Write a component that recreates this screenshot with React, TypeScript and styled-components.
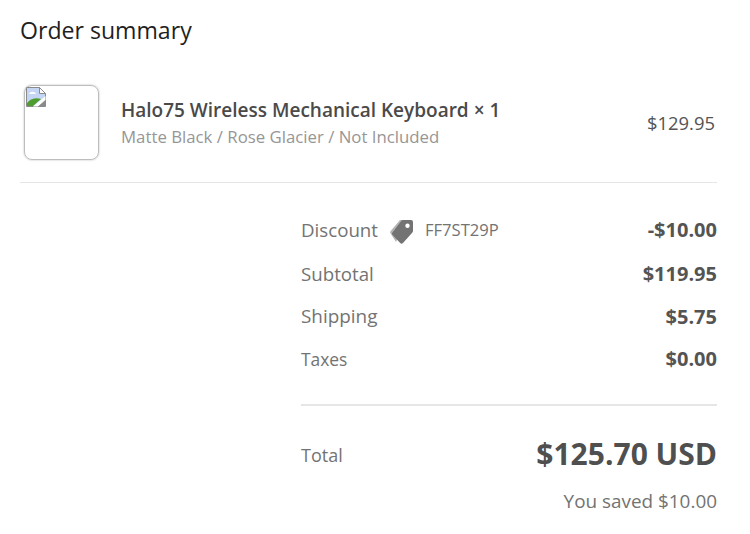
import React from 'react';
import styled, { createGlobalStyle } from 'styled-components';

const GlobalStyle = createGlobalStyle`
  html, body {
    margin: 0;
    padding: 0;
    background: #fff;
    font-family: "Open Sans", "Liberation Sans", sans-serif;
  }
`;

const Page = styled.div`
  width: 750px;
  height: 534px;
  box-sizing: border-box;
  padding: 15px 33px 0 20px;
  overflow: hidden;
`;

const Title = styled.h2`
  margin: 0;
  font-size: 23.1px;
  line-height: 30px;
  font-weight: 400;
  color: #1f1f1f;
`;

const ProductRow = styled.div`
  display: flex;
  align-items: center;
  margin-top: 40px;
  padding: 0 2px 22px 4px;
  border-bottom: 1px solid #e6e6e6;
`;

const Thumb = styled.div`
  width: 75px;
  height: 75px;
  box-sizing: border-box;
  flex: none;
  padding: 1px;
  border: 1px solid #bdbdbd;
  border-radius: 8px;
  box-shadow: 0 0 2px rgba(0, 0, 0, 0.3);
`;

const ProductInfo = styled.div`
  flex: 1;
  margin-left: 22px;
  padding-top: 2px;
`;

const ProductName = styled.div`
  font-size: 19px;
  line-height: 26px;
  font-weight: 600;
  color: #4a4a4a;
`;

const ProductVariant = styled.div`
  font-size: 16.8px;
  line-height: 28px;
  color: #969696;
`;

const ProductPrice = styled.div`
  font-size: 18.4px;
  font-weight: 500;
  color: #545454;
`;

const Summary = styled.div`
  margin: 25px 0 0 281px;
`;

const Line = styled.div`
  display: flex;
  align-items: center;
  justify-content: space-between;
  height: 42.5px;

  &:first-child {
    padding-bottom: 2px;
  }
`;

const Label = styled.div<{ $size?: number }>`
  display: flex;
  align-items: center;
  font-size: ${(props) => props.$size ?? 18.7}px;
  color: #737373;
`;

const TotalLabel = styled(Label)`
  margin-top: 2px;
`;

const Code = styled.span`
  margin-left: 12px;
  font-size: 16.6px;
  color: #737373;
`;

const TagIcon = styled.svg`
  width: 24px;
  height: 25px;
  margin: 4px 0 0 11px;
`;

const Amount = styled.div`
  font-size: 20px;
  font-weight: 700;
  color: #545454;
`;

const TotalRow = styled.div`
  display: flex;
  align-items: center;
  justify-content: space-between;
  margin-top: 24px;
  padding-top: 27px;
  border-top: 2px solid #e6e6e6;
`;

const GrandTotal = styled.div`
  font-size: 30px;
  line-height: 42px;
  font-weight: 700;
  color: #4f4f4f;
`;

const Saved = styled.div`
  margin-top: 13px;
  text-align: right;
  font-size: 18.9px;
  color: #737373;
`;

const BrokenImage = () => (
  <svg width="20" height="20" viewBox="0 0 20 20">
    <path d="M.5.5h13l6 6v13H.5z" fill="#c4d6f3" stroke="#8a8a8a" />
    <path d="M13.5.5v6h6z" fill="#fff" stroke="#8a8a8a" />
    <path d="M3 7c1-3 6-3 7 0z" fill="#fff" />
    <path d="M1 19v-3c3-4 9-6 14-4l-8 7z" fill="#4f9d2f" />
    <path d="M7 19.5L19.5 9v4L12 19.5z" fill="#fff" />
    <path d="M12 19.5L19.5 13v6.5z" fill="#8a8a8a" />
  </svg>
);

const lines = [
  { label: 'Subtotal', value: '$119.95', size: 18.7 },
  { label: 'Shipping', value: '$5.75', size: 18.9 },
  { label: 'Taxes', value: '$0.00', size: 17.4 },
];

export default function App() {
  return (
    <Page>
      <GlobalStyle />
      <Title>Order summary</Title>
      <ProductRow>
        <Thumb>
          <BrokenImage />
        </Thumb>
        <ProductInfo>
          <ProductName>Halo75 Wireless Mechanical Keyboard × 1</ProductName>
          <ProductVariant>Matte Black / Rose Glacier / Not Included</ProductVariant>
        </ProductInfo>
        <ProductPrice>$129.95</ProductPrice>
      </ProductRow>
      <Summary>
        <Line>
          <Label>
            Discount
            <TagIcon viewBox="0 0 24 25">
              <path d="M11 1h6L7 23 1.6 14.5a2 2 0 0 1 0-2.6z" fill="#b5b5b5" />
              <path d="M14 1h8a2 2 0 0 1 2 2v9a2 2 0 0 1-.6 1.4L14 24a2 2 0 0 1-2.8 0l-7.6-8a2 2 0 0 1 0-2.8L12.6 1.6A2 2 0 0 1 14 1zm4.5 3.6a2.2 2.2 0 1 0 0 4.4 2.2 2.2 0 0 0 0-4.4z" fill="#737373" fillRule="evenodd" />
            </TagIcon>
            <Code>FF7ST29P</Code>
          </Label>
          <Amount>-$10.00</Amount>
        </Line>
        {lines.map((line) => (
          <Line key={line.label}>
            <Label $size={line.size}>{line.label}</Label>
            <Amount>{line.value}</Amount>
          </Line>
        ))}
        <TotalRow>
          <TotalLabel $size={18}>Total</TotalLabel>
          <GrandTotal>$125.70 USD</GrandTotal>
        </TotalRow>
        <Saved>You saved $10.00</Saved>
      </Summary>
    </Page>
  );
}
